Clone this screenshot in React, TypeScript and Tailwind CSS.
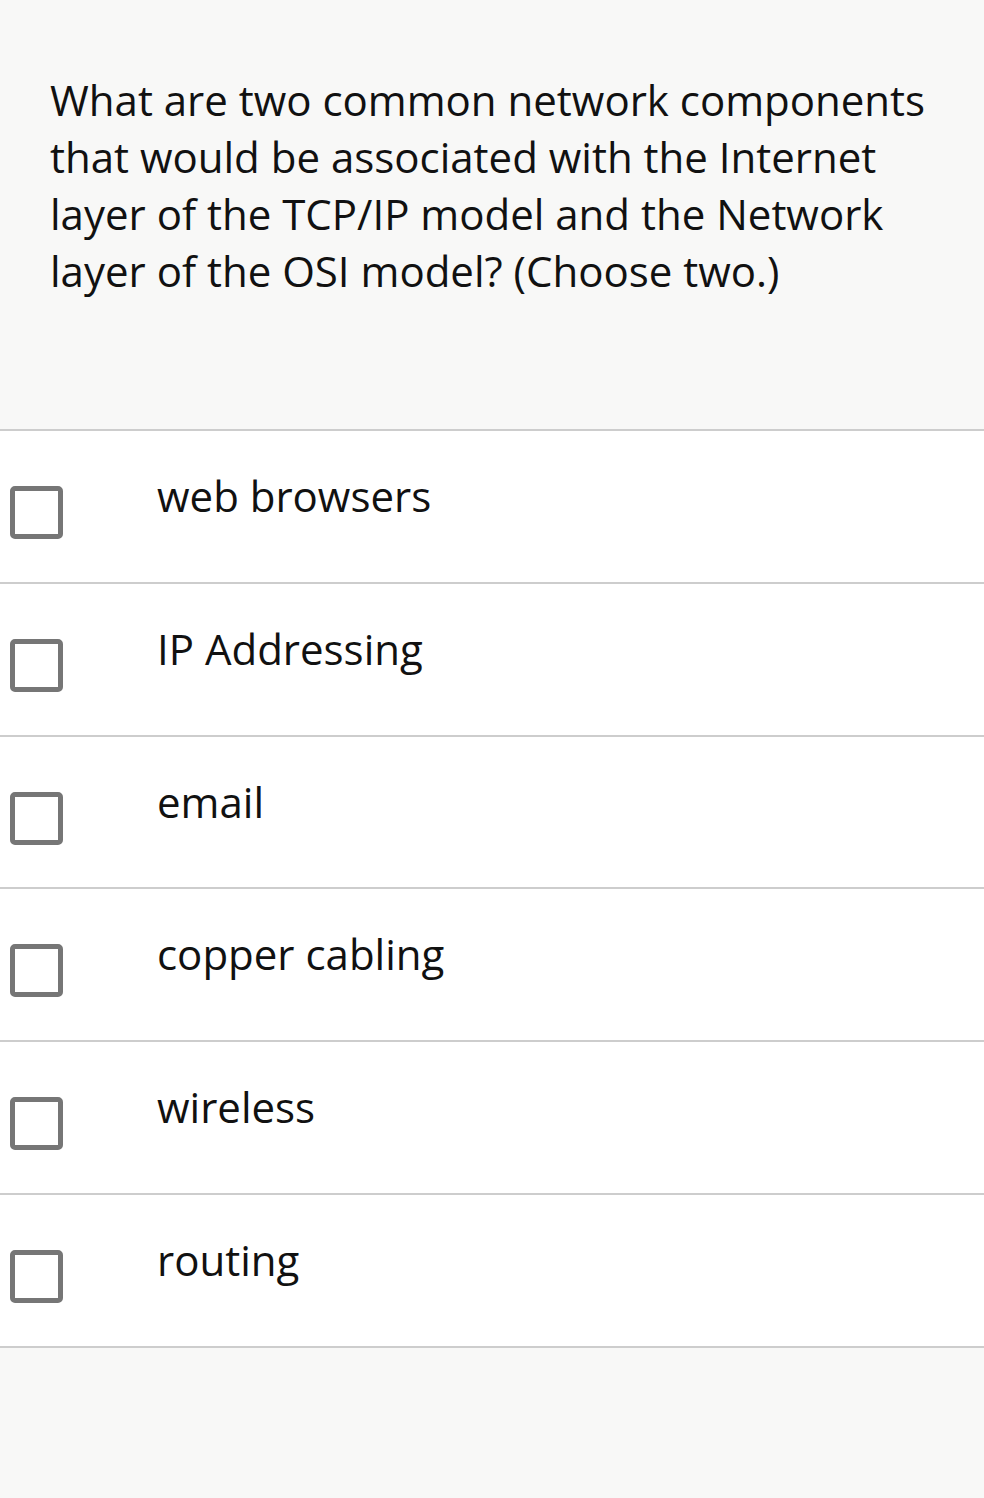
const options = [
  "web browsers",
  "IP Addressing",
  "email",
  "copper cabling",
  "wireless",
  "routing",
];

export default function App() {
  return (
    <div
      className="min-h-[1498px] w-full bg-[#f8f8f7] text-[#111111]"
      style={{ fontFamily: '"Open Sans", "Noto Sans", sans-serif' }}
    >
      <div className="h-[429px] pl-[50px] pr-[40px] pt-[71px]">
        <p className="text-[42px] leading-[57px]">
          What are two common network components that would be associated with
          the Internet layer of the TCP/IP model and the Network layer of the OSI
          model? (Choose two.)
        </p>
      </div>
      <div className="border-b-2 border-[#cdcdcd] bg-white">
        {options.map((label) => (
          <div
            key={label}
            className="flex h-[152.8px] items-start border-t-2 border-[#cdcdcd]"
          >
            <div className="ml-[10px] mt-[55px] h-[53px] w-[53px] rounded-[5px] border-[5px] border-[#767676] bg-white" />
            <div className="ml-[94px] mt-[36px] text-[42px] leading-[57px]">
              {label}
            </div>
          </div>
        ))}
      </div>
    </div>
  );
}
